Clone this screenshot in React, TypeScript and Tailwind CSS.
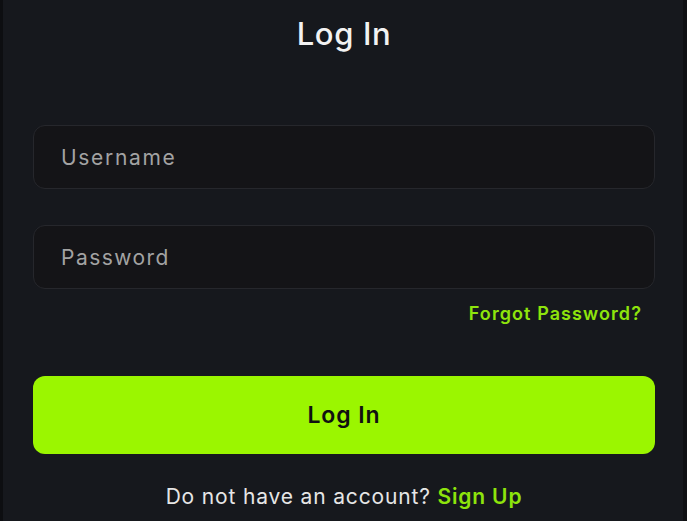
import React from 'react';

const App: React.FC = () => {
  return (
    <div
      className="w-[687px] h-[521px] overflow-hidden bg-[#16181d] border-l-[3px] border-l-[#0d0e11] border-r-[4px] border-r-[#0f1013]"
      style={{ fontFamily: 'Inter, "Noto Sans", sans-serif' }}
    >
      <div className="flex flex-col pl-[30px] pr-[28px]">
        <h1 className="mt-[14px] text-center text-[31px] leading-[40px] font-medium tracking-[0.02em] text-[#f2f2f2]">
          Log In
        </h1>

        {/* Inputs */}
        <div className="mt-[71px] flex flex-col gap-[36px]">
          <input
            type="text"
            placeholder="Username"
            className="h-[64px] w-full rounded-[12px] bg-[#141417] border border-[#26272c] px-[27px] text-[21px] tracking-[0.08em] text-[#e5e5e5] placeholder:text-[#a3a3a3] outline-none"
          />
          <input
            type="password"
            placeholder="Password"
            className="h-[64px] w-full rounded-[12px] bg-[#141417] border border-[#26272c] px-[27px] text-[21px] tracking-[0.07em] text-[#e5e5e5] placeholder:text-[#a3a3a3] outline-none"
          />
        </div>

        <div className="mt-[12px] flex justify-end pr-[13px]">
          <a href="#" className="text-[18px] leading-[26px] font-semibold tracking-[0.06em] text-[#8ee40c]">
            Forgot Password?
          </a>
        </div>

        <button className="mt-[49px] h-[78px] w-full rounded-[12px] bg-[#9bf600] text-[23px] font-semibold tracking-[0.04em] text-[#111111]">
          Log In
        </button>

        <p className="mt-[29px] text-center text-[21px] leading-[28px] tracking-[0.04em] text-[#e6e6e6]">
          Do not have an account?{' '}
          <a href="#" className="font-semibold text-[#8ee40c]">
            Sign Up
          </a>
        </p>
      </div>
    </div>
  );
};

export default App;
